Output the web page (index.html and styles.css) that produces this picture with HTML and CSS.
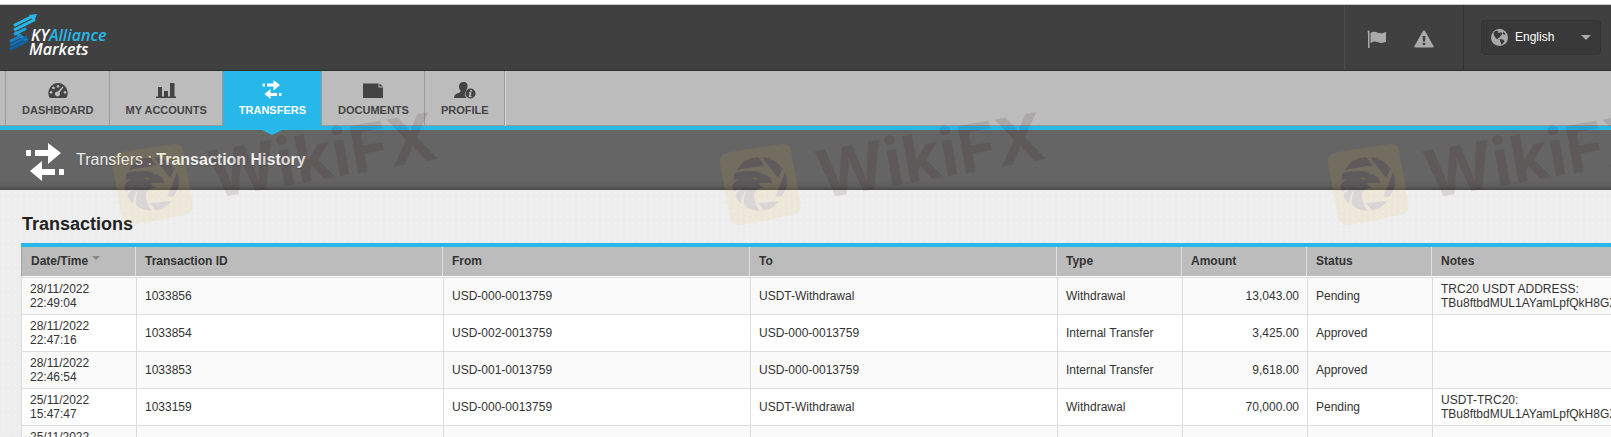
FILE: index.html
```html
<!DOCTYPE html>
<html lang="en">
<head>
    <meta charset="UTF-8">
    <meta name="viewport" content="width=device-width, initial-scale=1.0">
    <title>Transaction History</title>
    <link rel="stylesheet" href="styles.css">
</head>
<body>

    <!-- Header -->
    <header class="header">
        <a class="logo" href="#">
            <svg width="120" height="60" viewBox="0 0 120 60" role="img" aria-label="SKYAlliance Markets">
                <g fill="none" stroke-width="3">
                    <path d="M14 15.500L32 6.500" stroke="#27b8ea"/>
                    <path d="M14 20L35 9.500" stroke="#27b8ea"/>
                    <path d="M15 22L27 31" stroke="#1b8fd0"/>
                    <path d="M14 24.500L26 18.500" stroke="#1fa5dd"/>
                    <path d="M10 31.500L22 25.500" stroke="#1583c6"/>
                    <path d="M10 35.500L27 27" stroke="#0f6fb5"/>
                    <path d="M10 39.500L27 31" stroke="#0d62a5"/>
                </g>
                <path d="M29 5L37 4L34 12Z" fill="#27b8ea"/>
                <text x="31" y="31" class="logo-text">KY<tspan class="logo-blue">Alliance</tspan></text>
                <text x="29" y="45" class="logo-text">Markets</text>
            </svg>
        </a>
        <div class="alerts">
            <a href="#" aria-label="Flags">
                <svg width="20" height="18" viewBox="0 0 20 18">
                    <path d="M0.500 1.500a1 1 0 0 1 2 0V18H1V3Z"/>
                    <path d="M3.500 3C7 0.500 9 2 12 3C14.500 3.800 17 3 19 1.800V11.500C16 13.500 13 13 10.500 12C8 11 6 11.500 3.500 13Z"/>
                </svg>
            </a>
            <a href="#" aria-label="Warnings">
                <svg width="20" height="18" viewBox="0 0 20 18">
                    <path fill-rule="evenodd" d="M10 0.500Q10.800 0.500 11.200 1.300L19.500 16Q20 17.500 18.700 17.500H1.300Q0 17.500 0.500 16L8.800 1.300Q9.200 0.500 10 0.500ZM8.500 6L9 11.500H11L11.500 6ZM8.700 12.700V15H11.300V12.700Z"/>
                </svg>
            </a>
        </div>
        <div class="language">
            <label class="language-box">
                <svg width="17" height="17" viewBox="0 0 17 17">
                    <circle cx="8.500" cy="8.500" r="8.500" fill="#aaa"/>
                    <path fill="#393939" d="M2.500 3.500L5 1.800L7.500 2L6.500 3.500L8.500 4L10 3L11.500 4.500L9.500 7L8 9L6.500 8.500L7.500 10.500L5 9.500L3 6.500Z M12 2.500L14.500 5L13.500 6L12 5Z M8.500 10L12 10.500L13.500 12L12 14.500L10.500 15.800L9.500 13Z"/>
                </svg>
                <select aria-label="Language">
                    <option>English</option>
                </select>
                <span class="caret"></span>
            </label>
        </div>
    </header>

    <!-- Main Navigation -->
    <nav class="nav">
        <a href="#">
            <svg width="20" height="17" viewBox="0 0 20 17">
                <path fill-rule="evenodd" d="M1.800 16A9.700 9.700 0 1 1 18.200 16ZM10 3a1.400 1.400 0 1 0 0.010 0ZM5.500 4.500a1.400 1.400 0 1 0 0.010 0ZM3 9a1.400 1.400 0 1 0 0.010 0ZM17 9a1.400 1.400 0 1 0 0.010 0ZM14.500 4.500L10 9.500A2.500 2.500 0 1 0 11.500 10.500L15.500 5.500Z"/>
            </svg>
            DASHBOARD
        </a>
        <a href="#">
            <svg width="20" height="17" viewBox="0 0 20 17">
                <path d="M0 14.500H20V16H0ZM2 5H6V15H2ZM8 9H12V15H8ZM14 1H18.500V15H14Z"/>
            </svg>
            MY ACCOUNTS
        </a>
        <a href="#" class="active">
            <svg width="20" height="19" viewBox="0 0 38 38">
                <use href="#arrows"/>
            </svg>
            TRANSFERS
        </a>
        <a href="#">
            <svg width="20" height="17" viewBox="0 0 20 17">
                <path d="M0 1.500H15.500V5.500H20V16H0ZM16.500 1.500L20 4.500H16.500Z"/>
            </svg>
            DOCUMENTS
        </a>
        <a href="#">
            <svg width="22" height="17" viewBox="0 0 22 17">
                <path d="M9.500 0C12.500 0 14 2 13.500 5C13.300 7 12 8 12 9.200Q10.800 10.500 10.800 12Q10.800 14.500 12.500 16H0Q0 12.500 3 11.500Q6.500 10.500 6.800 9C5.500 8 5 6 5 4Q5.500 0 9.500 0Z"/>
                <circle cx="16.500" cy="11.500" r="5"/>
                <path fill="#bcbcbc" d="M16.300 8H18V9.500H16ZM15 10.200H17.500L16.700 14H17.500V15H14.700L15.500 11.200H14.700Z"/>
            </svg>
            PROFILE
        </a>
    </nav>

    <!-- Page Title -->
    <div class="page-title">
        <svg width="38" height="38" viewBox="0 0 38 38">
            <g id="arrows">
                <path d="M0 7.500Q0 7 1 7H5V13H1Q0 13 0 12ZM9 7H22V0L35 10L22 21V13H9Z"/>
                <path d="M38 31.500Q38 32 37 32H33V26H37Q38 26 38 27ZM29 26H16V18L4 28L16 38V32H29Z"/>
            </g>
        </svg>
        <h1>Transfers : <b>Transaction History</b></h1>
    </div>

    <main class="content">
        <h2>Transactions</h2>
        <table>
            <colgroup>
                <col class="col-date">
                <col class="col-wide">
                <col class="col-wide">
                <col class="col-wide">
                <col class="col-small">
                <col class="col-small">
                <col class="col-small">
                <col>
            </colgroup>
            <thead>
                <tr>
                    <th>Date/Time <span class="sort"></span></th>
                    <th>Transaction ID</th>
                    <th>From</th>
                    <th>To</th>
                    <th>Type</th>
                    <th>Amount</th>
                    <th>Status</th>
                    <th>Notes</th>
                </tr>
            </thead>
            <tbody>
                <tr>
                    <td>28/11/2022<br>22:49:04</td>
                    <td>1033856</td>
                    <td>USD-000-0013759</td>
                    <td>USDT-Withdrawal</td>
                    <td>Withdrawal</td>
                    <td class="amount">13,043.00</td>
                    <td>Pending</td>
                    <td>TRC20 USDT ADDRESS:<br>TBu8ftbdMUL1AYamLpfQkH8GX</td>
                </tr>
                <tr>
                    <td>28/11/2022<br>22:47:16</td>
                    <td>1033854</td>
                    <td>USD-002-0013759</td>
                    <td>USD-000-0013759</td>
                    <td>Internal Transfer</td>
                    <td class="amount">3,425.00</td>
                    <td>Approved</td>
                    <td></td>
                </tr>
                <tr>
                    <td>28/11/2022<br>22:46:54</td>
                    <td>1033853</td>
                    <td>USD-001-0013759</td>
                    <td>USD-000-0013759</td>
                    <td>Internal Transfer</td>
                    <td class="amount">9,618.00</td>
                    <td>Approved</td>
                    <td></td>
                </tr>
                <tr>
                    <td>25/11/2022<br>15:47:47</td>
                    <td>1033159</td>
                    <td>USD-000-0013759</td>
                    <td>USDT-Withdrawal</td>
                    <td>Withdrawal</td>
                    <td class="amount">70,000.00</td>
                    <td>Pending</td>
                    <td>USDT-TRC20:<br>TBu8ftbdMUL1AYamLpfQkH8GX</td>
                </tr>
                <tr>
                    <td>25/11/2022<br>&nbsp;</td>
                    <td></td>
                    <td></td>
                    <td></td>
                    <td></td>
                    <td></td>
                    <td></td>
                    <td></td>
                </tr>
            </tbody>
        </table>
    </main>

    <!-- Watermark -->
    <div class="watermark">
        <svg width="350" height="130" viewBox="48 0 1050 390">
            <defs>
                <g id="eagle">
                    <path d="M110 209Q130 174 174 171L193 196Z"/>
                    <path d="M186 171Q228 176 247 206L234 233Z"/>
                    <path d="M256 216Q270 255 245 289L226 290Z"/>
                    <path d="M175 310L237 303Q220 327 191 332Z"/>
                    <path fill-rule="evenodd" d="M103 220Q125 212 165 213Q180 214 186 221Q214 226 216 250Q208 245 196 249H176Q178 258 196 263Q174 262 164 276Q154 295 180 333Q150 330 134 317Q126 300 140 270Q124 285 123 312Q110 300 106 286Q112 274 126 266Q108 270 102 276Q96 265 99 252Q110 240 121 238Q108 237 100 243ZM154 234Q166 243 176 233Z"/>
                </g>
                <mask id="eagle-cut" maskUnits="userSpaceOnUse" x="48" y="120" width="270" height="270">
                    <rect x="48" y="120" width="270" height="270" fill="#fff"/>
                    <use href="#eagle" fill="#000"/>
                </mask>
            </defs>
            <g id="wikifx">
                <path class="wm-yellow" mask="url(#eagle-cut)" d="M85 157L243 132Q268 129 273 153L302 312Q305 336 281 344L124 375Q96 378 89 352L60 192Q57 164 85 157Z"/>
                <use class="wm-dark" href="#eagle"/>
                <text x="364" y="296" transform="rotate(-10 364 296)">WikiFX</text>
            </g>
        </svg>
        <svg width="350" height="130" viewBox="48 0 1050 390"><use href="#wikifx"/></svg>
        <svg width="350" height="130" viewBox="48 0 1050 390"><use href="#wikifx"/></svg>
    </div>

</body>
</html>
```

FILE: styles.css
```css
* {
    margin: 0;
    padding: 0;
    box-sizing: border-box;
}

body {
    position: relative;
    height: 100vh;
    padding-top: 4px;
    overflow: hidden;
    background: #fff;
    color: #333;
    font-family: "Liberation Sans", Arial, sans-serif;
    font-size: 12px;
}

a {
    color: inherit;
    text-decoration: none;
}

/* Header */
.header {
    display: flex;
    height: 67px;
    background: #404040;
    border-top: 1px solid #c8c8c8;
    border-bottom: 1px solid #303030;
}

.logo {
    margin-top: 5px;
    margin-right: auto;
}

.logo-text {
    fill: #fff;
    font-family: "Open Sans", sans-serif;
    font-size: 16px;
    font-weight: 600;
    font-style: italic;
}

.logo-blue {
    fill: #27b8ea;
}

.alerts {
    display: flex;
    align-items: center;
    gap: 27px;
    padding: 2px 29px 0 22px;
    border-left: 1px solid #4c4c4c;
    border-right: 1px solid #333;
}

.alerts a {
    display: flex;
}

.alerts svg {
    fill: #aaa;
}

.language {
    padding: 15px 10px 0 17px;
}

.language-box {
    display: flex;
    align-items: center;
    width: 120px;
    height: 35px;
    padding: 0 9px;
    background: #393939;
    border: 1px solid #333;
    border-radius: 4px;
}

.language-box select {
    flex: 1;
    min-width: 0;
    margin-left: 7px;
    padding-bottom: 2px;
    appearance: none;
    background: none;
    border: none;
    color: #fff;
    font: inherit;
}

.caret {
    border: 5px solid transparent;
    border-top-color: #aaa;
    border-bottom: none;
}

/* Main Navigation */
.nav {
    display: flex;
    height: 59px;
    padding-left: 5px;
    background: linear-gradient(#bcbcbc 54px, #999 54px, #999 55px, #27b8ea 55px);
}

.nav a {
    position: relative;
    display: flex;
    flex-direction: column;
    align-items: center;
    justify-content: flex-end;
    height: 55px;
    padding: 0 15px 9px 16px;
    border-left: 1px solid #9b9b9b;
    color: #444;
    font-size: 11px;
    font-weight: bold;
    line-height: 14px;
}

.nav a:last-child {
    border-right: 1px solid #9b9b9b;
    box-shadow: 1px 0 #d6d6d6;
}

.nav svg {
    margin-bottom: 4px;
    fill: #444;
}

.nav .active {
    background: #27b8ea;
    color: #fff;
}

.nav .active svg {
    fill: #fff;
}

.nav .active::after {
    content: "";
    position: absolute;
    top: 59px;
    left: 50%;
    margin-left: -10px;
    border: 10px solid transparent;
    border-top: 5px solid #27b8ea;
    border-bottom: none;
}

/* Page Title */
.page-title {
    display: flex;
    align-items: center;
    gap: 12px;
    height: 60px;
    padding-left: 26px;
    background: linear-gradient(#656565 50px, #5e5e5e 56px, #484848);
}

.page-title svg {
    margin-top: 4px;
    fill: #fff;
}

.page-title h1 {
    color: #eee;
    font-size: 16px;
    font-weight: normal;
    text-shadow: 0 1px 1px #555;
}

/* Content */
.content {
    padding: 24px 0 0 21px;
    background: radial-gradient(circle, #f0f0f0 1px, transparent 2px) 0 0 / 6px 6px #ededed;
}

.content h2 {
    padding-left: 1px;
    margin-bottom: 9px;
    color: #222;
    font-size: 18px;
    line-height: 20px;
}

table {
    width: 100%;
    table-layout: fixed;
    border-spacing: 0;
    border-top: 4px solid #27b8ea;
    background: #fff;
}

.col-date {
    width: 115px;
}

.col-wide {
    width: 307px;
}

.col-small {
    width: 125px;
}

th {
    height: 30px;
    padding: 0 9px 2px;
    background: #bcbcbc;
    border-right: 1px solid #e0e0e0;
    border-bottom: 1px solid #fff;
    text-align: left;
    line-height: 14px;
}

th:first-child {
    border-left: 1px solid #a5a5a5;
}

th:last-child {
    border-right: none;
}

.sort {
    display: inline-block;
    margin: 0 0 5px 1px;
    border: 4px solid transparent;
    border-top-color: #888;
    border-bottom: none;
}

td {
    height: 37px;
    padding: 4px 8px;
    border-top: 1px solid #ddd;
    border-left: 1px solid #ddd;
    line-height: 14px;
    white-space: nowrap;
}

tbody tr:nth-child(odd) {
    background: #fafafa;
}

.amount {
    text-align: right;
}

/* Watermark */
.watermark {
    position: absolute;
    top: 100px;
    left: 108px;
    right: 0;
    display: flex;
    gap: 258px;
    overflow: hidden;
    pointer-events: none;
}

.watermark svg {
    flex: none;
}

.wm-yellow {
    fill: rgba(240, 190, 40, 0.1);
}

.wm-dark {
    fill: rgba(50, 0, 20, 0.1);
}

.watermark text {
    fill: rgba(50, 0, 0, 0.1);
    font-family: Inter, sans-serif;
    font-size: 198px;
    font-weight: 700;
}
```
